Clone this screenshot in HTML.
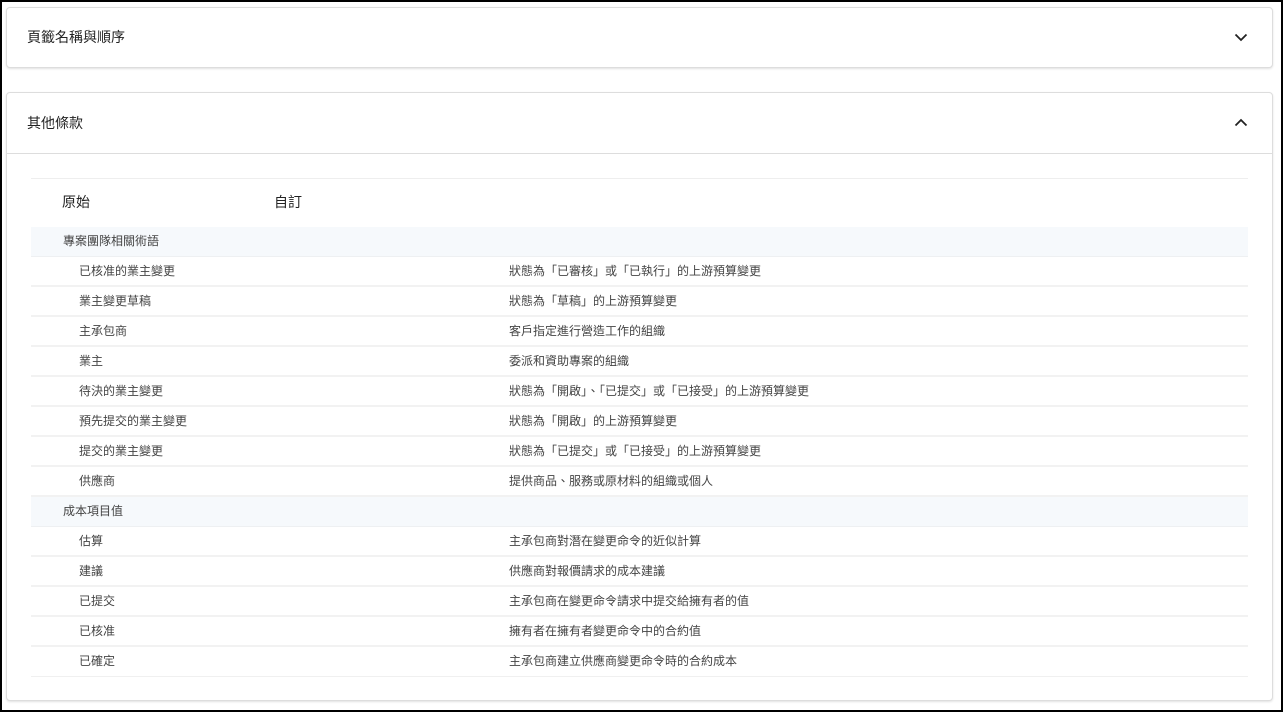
<!DOCTYPE html>
<html><head><meta charset="utf-8"><style>
*{box-sizing:border-box;margin:0;padding:0}
html,body{width:1283px;height:712px;overflow:hidden}
body{background:#000;font-family:"Liberation Sans","Noto Sans CJK TC",sans-serif;color:#222;position:relative}
.inner{position:absolute;left:2px;top:2px;width:1279px;height:708px;background:#fff}
.card{position:absolute;left:6px;width:1267px;background:#fff;border:1px solid #ddd;border-radius:4px;box-shadow:0 1px 2px rgba(0,0,0,.12)}
.title{position:absolute;left:20px;font-size:14px}
.chev{position:absolute;right:24px}
.tbl{position:absolute;left:31px;top:178px;width:1217px;border-top:1px solid #eee}
.hdr{height:48px;position:relative;font-size:14px}
.hdr span{position:absolute;top:13px}
.row{height:30px;border-bottom:2px solid #f2f2f2;position:relative;font-size:12px;color:#444}
.row.g{background:#f6f9fc;border-bottom:1px solid #eef0f2}
.row span{position:absolute;top:5px}
.a{left:48px}.g .a{left:32px}.b{left:478px}
</style></head><body><div class="inner"></div>
<div class="card" style="top:7px;height:61px">
<div class="title" style="top:19px">頁籤名稱與順序</div>
<svg class="chev" style="top:24px" width="14" height="10" viewBox="0 0 14 10"><path d="M1.5 2.5 7 8l5.5-5.5" fill="none" stroke="#222" stroke-width="1.8"/></svg>
</div>
<div class="card" style="top:92px;height:609px">
<div class="title" style="top:20px">其他條款</div>
<svg class="chev" style="top:25px" width="14" height="10" viewBox="0 0 14 10"><path d="M1.5 7.5 7 2l5.5 5.5" fill="none" stroke="#222" stroke-width="1.8"/></svg>
<div style="position:absolute;left:0;right:0;top:60px;border-top:1px solid #ddd"></div>
</div>
<div class="tbl" style="left:31px">
<div class="hdr"><span style="left:31px">原始</span><span style="left:243px">自訂</span></div>
<div class="row g"><span class="a">專案團隊相關術語</span></div>
<div class="row"><span class="a">已核准的業主變更</span><span class="b">狀態為「已審核」或「已執行」的上游預算變更</span></div>
<div class="row"><span class="a">業主變更草稿</span><span class="b">狀態為「草稿」的上游預算變更</span></div>
<div class="row"><span class="a">主承包商</span><span class="b">客戶指定進行營造工作的組織</span></div>
<div class="row"><span class="a">業主</span><span class="b">委派和資助專案的組織</span></div>
<div class="row"><span class="a">待決的業主變更</span><span class="b">狀態為「開啟」、「已提交」或「已接受」的上游預算變更</span></div>
<div class="row"><span class="a">預先提交的業主變更</span><span class="b">狀態為「開啟」的上游預算變更</span></div>
<div class="row"><span class="a">提交的業主變更</span><span class="b">狀態為「已提交」或「已接受」的上游預算變更</span></div>
<div class="row"><span class="a">供應商</span><span class="b">提供商品、服務或原材料的組織或個人</span></div>
<div class="row g"><span class="a">成本項目值</span></div>
<div class="row"><span class="a">估算</span><span class="b">主承包商對潛在變更命令的近似計算</span></div>
<div class="row"><span class="a">建議</span><span class="b">供應商對報價請求的成本建議</span></div>
<div class="row"><span class="a">已提交</span><span class="b">主承包商在變更命令請求中提交給擁有者的值</span></div>
<div class="row"><span class="a">已核准</span><span class="b">擁有者在擁有者變更命令中的合約值</span></div>
<div class="row" style="border-bottom:1px solid #f0f0f0"><span class="a">已確定</span><span class="b">主承包商建立供應商變更命令時的合約成本</span></div>
</div>
</body></html>
